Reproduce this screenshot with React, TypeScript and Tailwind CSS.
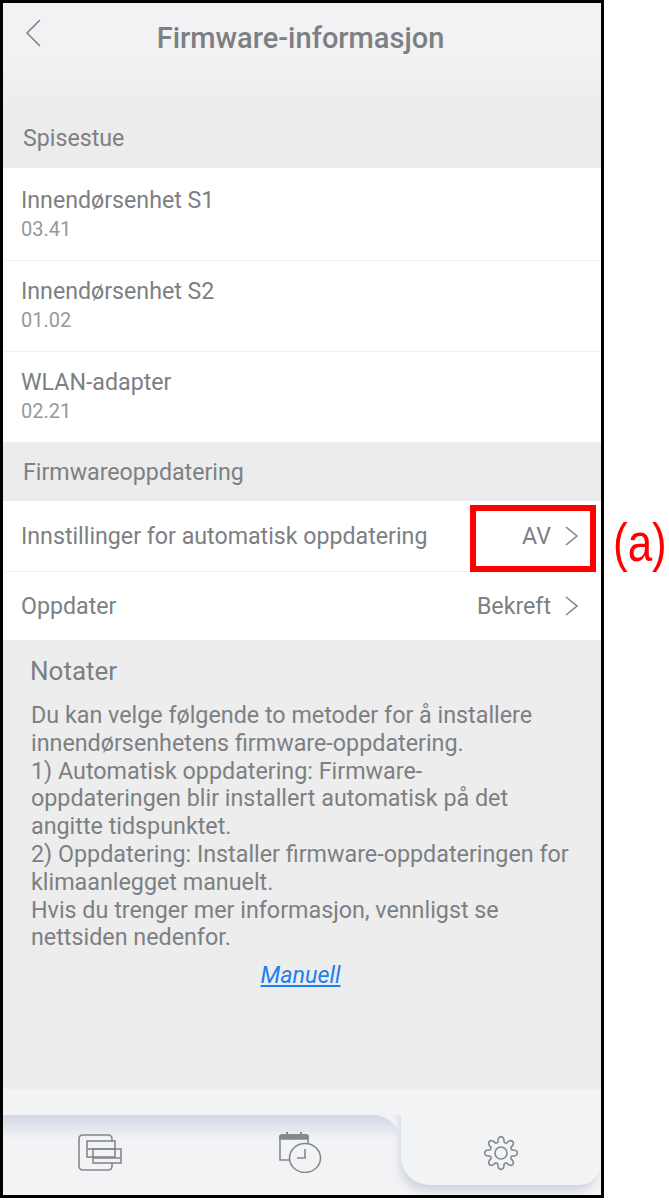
import React from "react";

const font = { fontFamily: "Roboto, sans-serif" };

const polar = (r: number, deg: number) => {
  const rad = ((deg - 90) * Math.PI) / 180;
  return `${(20 + r * Math.cos(rad)).toFixed(2)} ${(20 + r * Math.sin(rad)).toFixed(2)}`;
};

// 8 tooth gear for the settings tab
const gearPath = () => {
  let d = `M${polar(11.5, -15)}`;
  for (let i = 0; i < 8; i++) {
    const a = i * 45;
    d += ` C${polar(18.5, a - 12)} ${polar(18.5, a + 12)} ${polar(11.5, a + 15)}`;
    d += ` Q${polar(10.5, a + 22.5)} ${polar(11.5, a + 30)}`;
  }
  return d + "Z";
};

const Chevron = () => (
  <svg width="14" height="20" viewBox="0 0 14 20" fill="none" stroke="#7f8487" strokeWidth="1.6">
    <path d="M1 1 L12 10 L1 19" />
  </svg>
);

const SectionHead = ({ title, h, pad }: { title: string; h: string; pad?: string }) => (
  <div className={`bg-[#ececec] flex items-center pl-5 text-[23.2px] text-[#7c8083] ${h} ${pad || ""}`}>{title}</div>
);

const VersionRow = ({ name, version, h, pt, line }: { name: string; version: string; h: string; pt: string; line?: boolean }) => (
  <div className={`bg-white pl-[18px] ${pt} ${h} ${line ? "border-b border-[#f0f0f0]" : ""}`}>
    <div className="text-[23.2px] leading-[29px] text-[#7c8083]">{name}</div>
    <div className="text-[20px] leading-[28px] text-[#95999b]">{version}</div>
  </div>
);

const ActionRow = ({ label, value, h, line }: { label: string; value: string; h: string; line?: boolean }) => (
  <div className={`bg-white flex items-center justify-between pl-[18px] pr-[22px] pt-[1px] ${h} ${line ? "border-b border-[#f0f0f0]" : ""}`}>
    <span className="text-[23.2px] text-[#7c8083]">{label}</span>
    <span className="flex items-center gap-[14px] text-[23.2px] text-[#7c8083]">
      {value}
      <Chevron />
    </span>
  </div>
);

export default function App() {
  return (
    <div className="relative w-[669px] h-[1200px] bg-white" style={font}>
      <div className="w-[604px] h-[1198px] border-[3px] border-black flex flex-col overflow-hidden">
        {/* Header */}
        <div className="relative h-[107px] bg-gradient-to-b from-[#f2f2f4] via-[#f2f2f4] to-[#ececec] shrink-0">
          <svg className="absolute left-[22px] top-[16px]" width="16" height="28" viewBox="0 0 16 28" fill="none" stroke="#7f8487" strokeWidth="1.6">
            <path d="M15 1 L2 14 L15 27" />
          </svg>
          <div className="pt-[18px] pr-[3px] text-center text-[29px] leading-[34px] font-medium text-[#7c8083]">Firmware-informasjon</div>
        </div>

        <SectionHead title="Spisestue" h="h-[58px]" pad="pb-[2px]" />
        <VersionRow name="Innendørsenhet S1" version="03.41" h="h-[93px]" pt="pt-[18px]" line />
        <VersionRow name="Innendørsenhet S2" version="01.02" h="h-[91px]" pt="pt-[16px]" line />
        <VersionRow name="WLAN-adapter" version="02.21" h="h-[90px]" pt="pt-[16px]" />
        <SectionHead title="Firmwareoppdatering" h="h-[59px]" pad="pt-[1px]" />
        <ActionRow label="Innstillinger for automatisk oppdatering" value="AV" h="h-[71px]" line />
        <ActionRow label="Oppdater" value="Bekreft" h="h-[68px]" />

        {/* Notes */}
        <div className="bg-[#ededed] h-[449px] shrink-0 pl-7 pr-6 pt-[14px] text-[#7c8083]">
          <div className="text-[26px] leading-[34px] -ml-[1px]">Notater</div>
          <p className="mt-[14px] text-[23.3px] leading-[27.8px]">
            Du kan velge følgende to metoder for å installere innendørsenhetens firmware-oppdatering.
            <br />
            1) Automatisk oppdatering: Firmware-
            <br />
            oppdateringen blir installert automatisk på det angitte tidspunktet.
            <br />
            2) Oppdatering: Installer firmware-oppdateringen for klimaanlegget manuelt.
            <br />
            Hvis du trenger mer informasjon, vennligst se nettsiden nedenfor.
          </p>
          <div className="mt-[6px] pr-[7px] text-center text-[23.3px] italic underline text-[#1a7ff0]">Manuell</div>
        </div>

        {/* Bottom tabs */}
        <div className="flex-1 bg-[#f2f3f5] flex overflow-hidden">
          <div className="w-[398px] shrink-0 flex flex-col">
            <div className="h-[26px] shrink-0 bg-[#f2f3f5] relative z-10" />
            <div className="flex-1 rounded-tr-[28px] bg-gradient-to-b from-[#d3d7e3] to-[#f2f3f5] bg-[length:100%_24px] bg-no-repeat flex items-start pl-[75px] pt-[16px] gap-[156px]">
              <svg className="mt-[3px]" width="44" height="38" viewBox="0 0 44 38" fill="none" stroke="#85888b" strokeWidth="1.6">
                <path d="M34 29 V32 Q34 36 30 36 H5 Q1 36 1 32 V5 Q1 1 5 1 H30 Q34 1 34 5 V7" />
                <rect x="9" y="7" width="28" height="16" />
                <path d="M9 15 H37" />
                <rect x="15" y="15" width="28" height="14" />
                <path d="M15 24 H43" />
              </svg>
              <svg width="44" height="42" viewBox="0 0 44 42" fill="none" stroke="#85888b" strokeWidth="1.6">
                <path d="M12 29 H2 V6 Q2 4 4 4 H28 Q30 4 30 6 V13" />
                <path d="M2 6 Q2 4 4 4 H28 Q30 4 30 6 V8 H2 Z" fill="#85888b" />
                <path d="M9 1 V5 M23 1 V5" strokeWidth="2" />
                <ellipse cx="27" cy="27" rx="15.5" ry="14.5" fill="#f2f3f5" />
                <path d="M27 18 V27 H19" />
              </svg>
            </div>
          </div>
          <div className="relative z-[5] flex-1 mb-[10px] rounded-bl-[28px] rounded-br-[22px] bg-[#f2f3f5] shadow-[-3px_8px_8px_-2px_#d0d4e0] flex items-end justify-center pb-[12px]">
            <svg width="40" height="40" viewBox="0 0 40 40" fill="none" stroke="#85888b" strokeWidth="1.6" strokeLinejoin="round">
              <circle cx="20" cy="20" r="6" />
              <path d={gearPath()} />
            </svg>
          </div>
        </div>
      </div>

      {/* Annotation */}
      <div className="absolute left-[470px] top-[505px] w-[126px] h-[67px] border-[6px] border-[#ff0000]" />
      <div className="absolute left-[613px] top-[511px] text-[53px] leading-[64px] text-[#ff0000] scale-x-[0.83] origin-left" style={{ fontFamily: '"Liberation Sans", sans-serif' }}>(a)</div>
    </div>
  );
}
